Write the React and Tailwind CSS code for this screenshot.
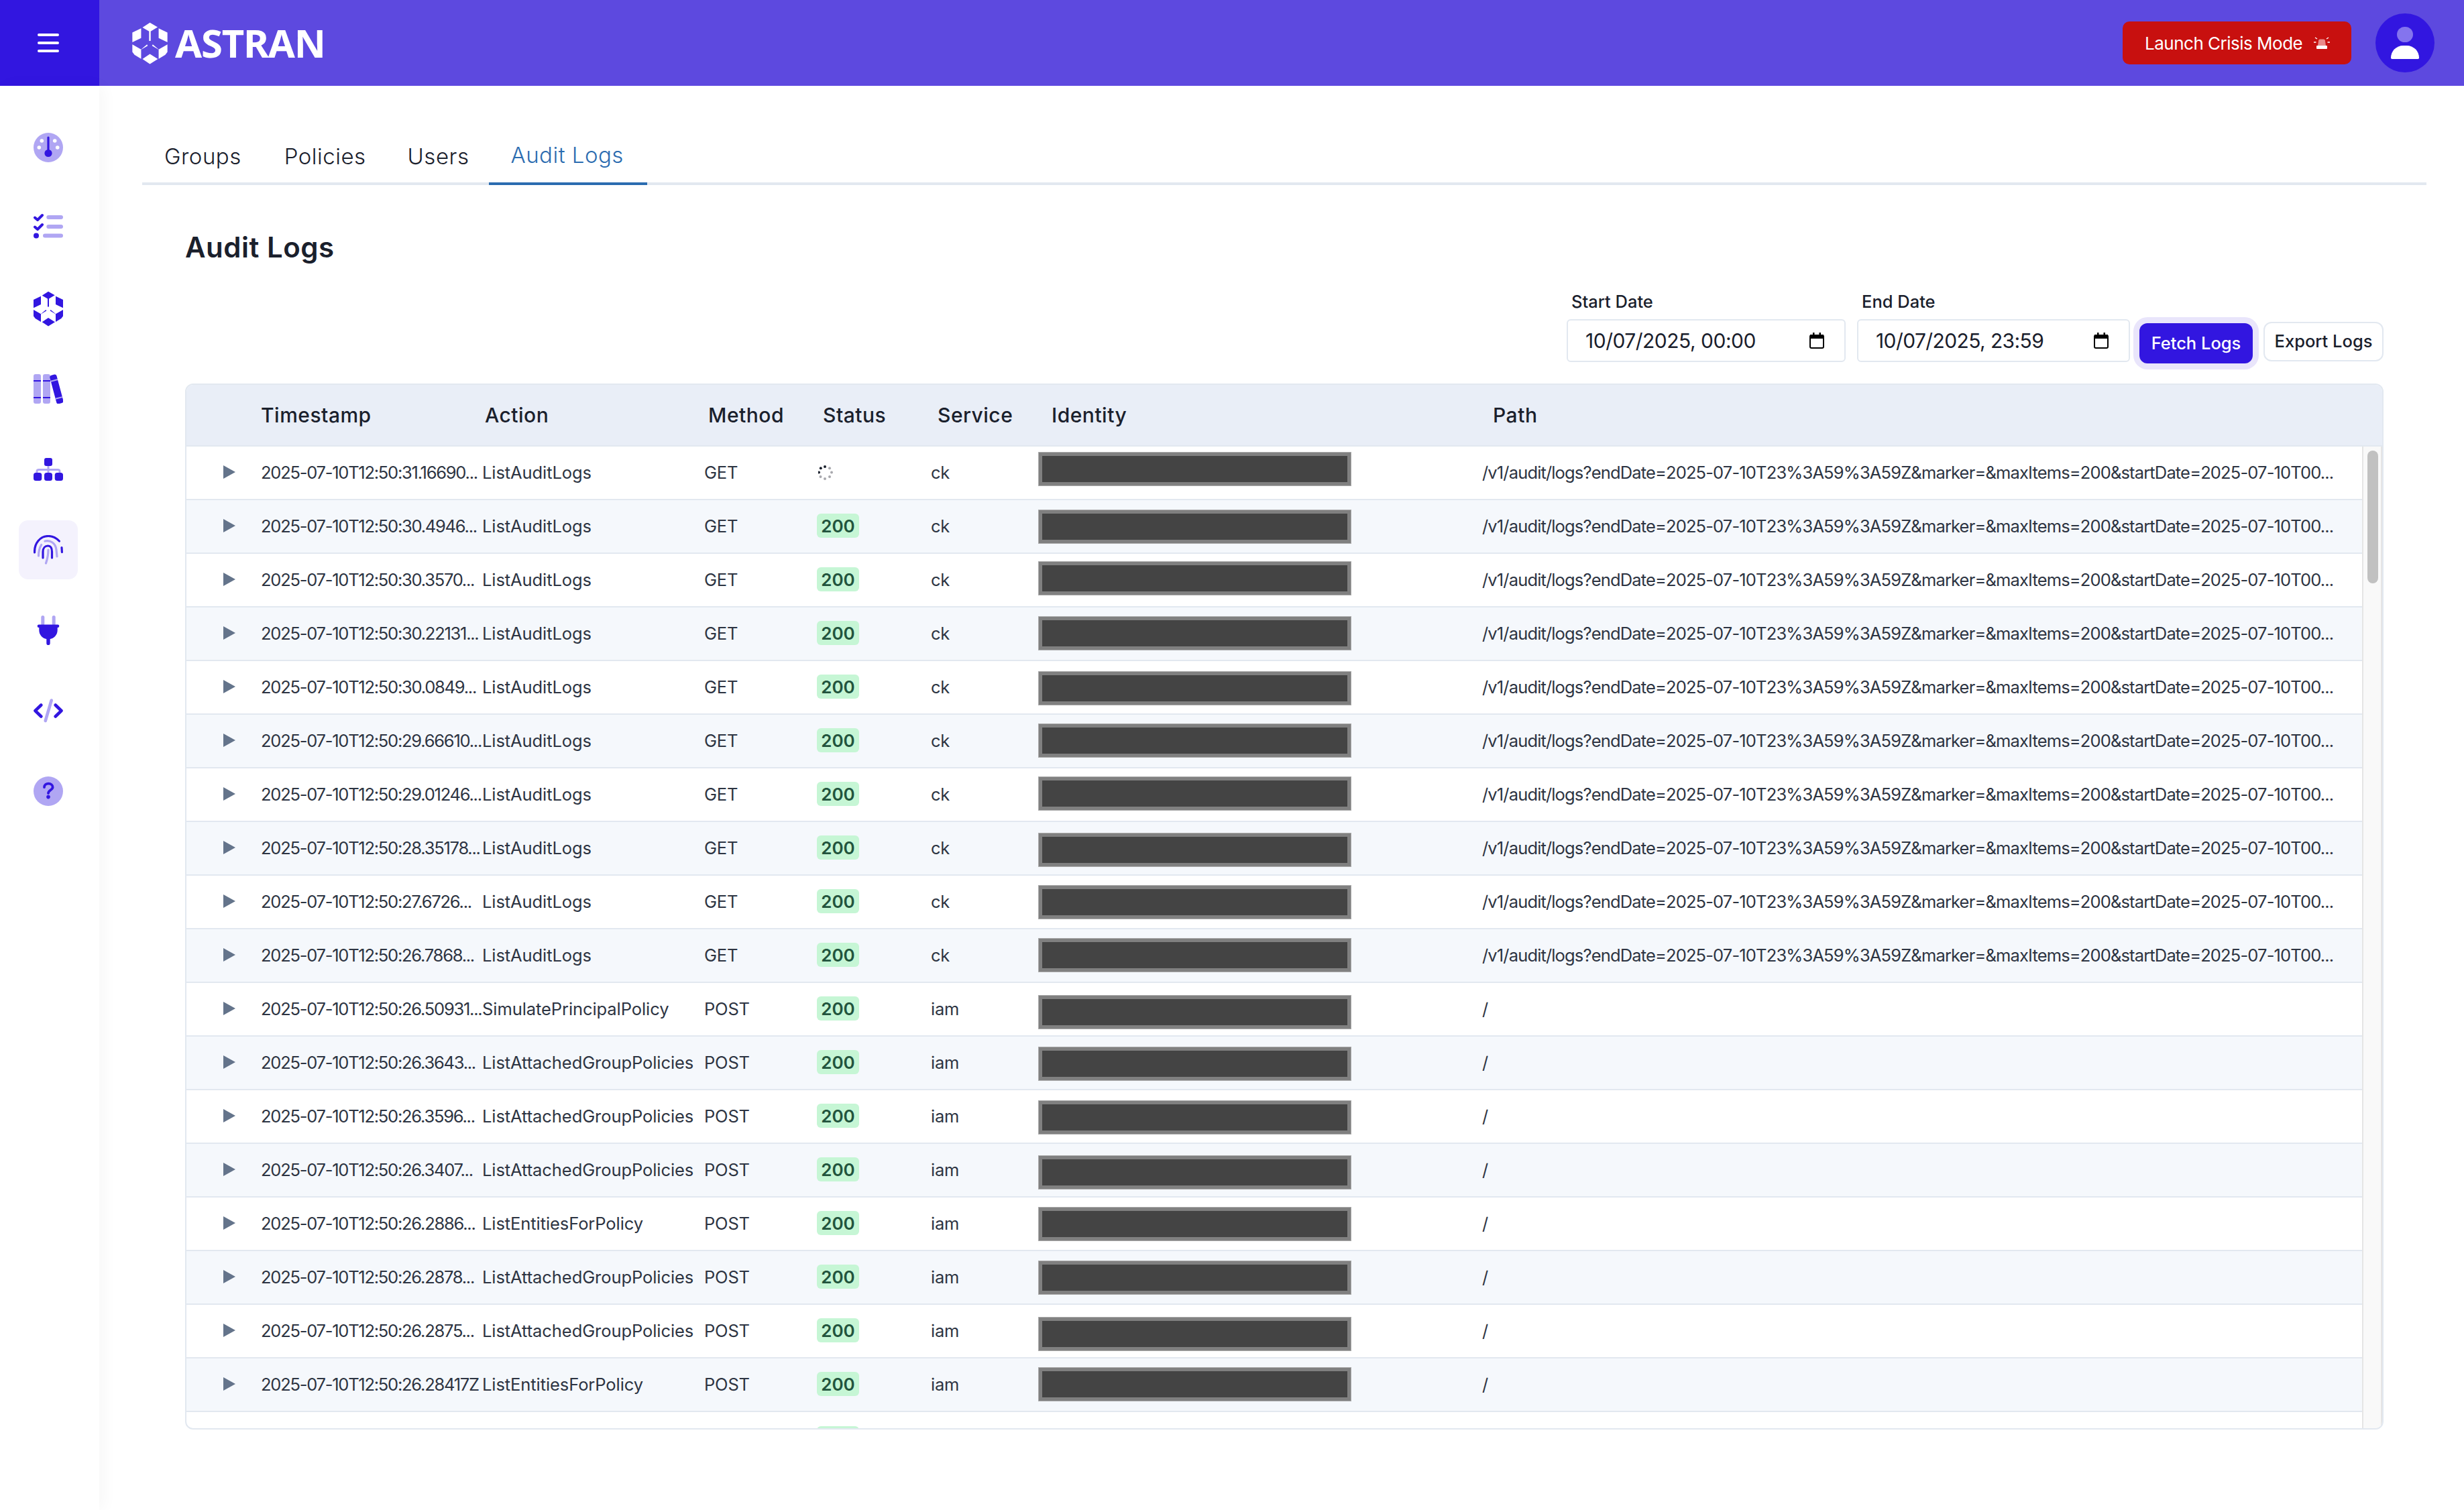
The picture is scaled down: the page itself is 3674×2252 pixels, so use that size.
import React from 'react';

const DARK = '#3216e0';
const LIGHT = '#b0a6f3';

const PATH = '/v1/audit/logs?endDate=2025-07-10T23%3A59%3A59Z&marker=&maxItems=200&startDate=2025-07-10T00...';
const LIST = 'ListAttachedGroupPolicies';
const ENT = 'ListEntitiesForPolicy';

const rows = [
  { ts: '31.16690...', action: 'ListAuditLogs', shift: -6, loading: true },
  { ts: '30.4946...', action: 'ListAuditLogs', shift: 0 },
  { ts: '30.3570...', action: 'ListAuditLogs', shift: -3 },
  { ts: '30.22131...', action: 'ListAuditLogs', shift: -1 },
  { ts: '30.0849...', action: 'ListAuditLogs', shift: 1 },
  { ts: '29.66610...', action: 'ListAuditLogs', shift: -1 },
  { ts: '29.01246...', action: 'ListAuditLogs', shift: -2 },
  { ts: '28.35178...', action: 'ListAuditLogs', shift: 2 },
  { ts: '27.6726...', action: 'ListAuditLogs', shift: 0 },
  { ts: '26.7868...', action: 'ListAuditLogs', shift: -1 },
  { ts: '26.50931...', action: 'SimulatePrincipalPolicy', shift: 4, iam: true },
  { ts: '26.3643...', action: LIST, shift: 1, iam: true },
  { ts: '26.3596...', action: LIST, shift: 1, iam: true },
  { ts: '26.3407...', action: LIST, shift: 3, iam: true },
  { ts: '26.2886...', action: ENT, shift: 0, iam: true },
  { ts: '26.2878...', action: LIST, shift: 0, iam: true },
  { ts: '26.2875...', action: LIST, shift: 4, iam: true },
  { ts: '26.28417Z', action: ENT, shift: -1, iam: true },
];

function HexLogo({ color, className }) {
  return (
    <svg viewBox="0 0 44 53" className={className} fill={color}>
      <path d="M22 .7 31.7 6.3 23 11.6V23.5H21V11.6L12.7 6.7Z" />
      <path d="M0 13 11 7.7V20L0 25.3Z" />
      <path d="M44 13 33 7.7V20L44 25.3Z" />
      <path d="M0 28 11 34.2 18.4 28 19.3 29.6 11 34.4V46L2.7 41 0 37.5Z" />
      <path d="M44 28 33 34.2 25.6 28 24.7 29.6 33 34.4V46L41.3 41 44 37.5Z" />
      <path d="M22 40 32 46.3 22 52.6 12.7 46.3Z" />
    </svg>
  );
}

function DialIcon() {
  return (
    <svg viewBox="0 0 44 44" className="w-[44px] h-[44px]">
      <circle cx="22" cy="22" r="22" fill={LIGHT} />
      <circle cx="12.3" cy="12" r="2.8" fill="#fff" />
      <circle cx="31.7" cy="12" r="2.8" fill="#fff" />
      <circle cx="8.3" cy="22" r="2.8" fill="#fff" />
      <circle cx="35.7" cy="22" r="2.8" fill="#fff" />
      <path d="M22 7V28" stroke={DARK} strokeWidth="3.2" strokeLinecap="round" />
      <circle cx="22" cy="30.5" r="5.6" fill={DARK} />
    </svg>
  );
}

function ChecklistIcon() {
  return (
    <svg viewBox="0 0 44 44" className="w-[44px] h-[44px]" fill="none">
      <path d="M2 6.5 6 10 13 3M2 20.5 6 24 13 17" stroke={DARK} strokeWidth="4" strokeLinecap="round" strokeLinejoin="round" />
      <circle cx="4" cy="33.5" r="4" fill={DARK} />
      <rect x="19.3" y="3" width="24.7" height="6" rx="3" fill={LIGHT} />
      <rect x="19.3" y="17" width="24.7" height="6" rx="3" fill={LIGHT} />
      <rect x="14" y="30.5" width="30" height="6" rx="3" fill={LIGHT} />
    </svg>
  );
}

function BooksIcon() {
  return (
    <svg viewBox="0 0 44 44" className="w-[44px] h-[44px]">
      <rect x="0" y="0" width="11" height="44" rx="3" fill={LIGHT} />
      <rect x="14" y="0" width="11" height="44" rx="3" fill={LIGHT} />
      <path d="M0 10H11M0 35H11M14 10H25M14 35H25" stroke={DARK} strokeWidth="2" />
      <g transform="rotate(-15 34 22)">
        <rect x="29" y="0.5" width="10.5" height="44" rx="3" fill={DARK} />
        <path d="M29 9H39.5M29 36H39.5" stroke={LIGHT} strokeWidth="2" />
      </g>
    </svg>
  );
}

function OrgIcon() {
  return (
    <svg viewBox="0 0 44 44" className="w-[44px] h-[44px]" fill={DARK}>
      <path d="M5 29V25Q5 22.5 8 22.5H36Q39 22.5 39 25V29M22 15V29" stroke={LIGHT} strokeWidth="3" fill="none" />
      <rect x="16" y="5" width="12" height="12" rx="3" />
      <rect x="0" y="27" width="12.3" height="12" rx="3.5" />
      <rect x="16" y="27" width="12" height="12" rx="3.5" />
      <rect x="31.7" y="27" width="12.3" height="12" rx="3.5" />
    </svg>
  );
}

function FingerprintIcon() {
  return (
    <svg viewBox="0 0 44 44" className="w-[44px] h-[44px]" fill="none" strokeWidth="3.2" strokeLinecap="round">
      <path d="M1.6 26C1 12 10 1.5 22 1.5 28.5 1.5 34 4.5 38.4 9M42 18.5 42.4 25.5" stroke={DARK} />
      <path d="M7.5 31C7.5 24 9 19 11.7 14.5M17 9C25 7 33 12 34 22L35 32" stroke={LIGHT} />
      <path d="M14 34V25C14 19 17.5 16 21.5 16 25 16 27.5 19 27.5 25V34" stroke={DARK} />
      <path d="M22 22C22 29 20.5 36 18.5 42" stroke={LIGHT} />
    </svg>
  );
}

function PlugIcon() {
  return (
    <svg viewBox="0 0 44 44" className="w-[44px] h-[44px]">
      <rect x="11.3" y="0" width="5" height="15" rx="2.5" fill={LIGHT} />
      <rect x="27.7" y="0" width="5" height="15" rx="2.5" fill={LIGHT} />
      <rect x="5.7" y="13.6" width="32.6" height="4.4" rx="2.2" fill={DARK} />
      <path d="M8.3 17H35.7V22C35.7 29 30 34.5 24.7 35V41.5A2.7 2.7 0 0 1 19.3 41.5V35C14 34.5 8.3 29 8.3 22Z" fill={DARK} />
    </svg>
  );
}

function CodeIcon() {
  return (
    <svg viewBox="0 0 44 44" className="w-[44px] h-[44px]" fill="none" strokeWidth="4.6" strokeLinecap="round">
      <path d="M26.7 6.5 17.7 37" stroke={LIGHT} />
      <path d="M11.3 13.5 2.5 22 11.3 30.5M32.7 13.5 41.5 22 32.7 30.5" stroke={DARK} strokeLinejoin="round" />
    </svg>
  );
}

function HelpIcon() {
  return (
    <svg viewBox="0 0 44 44" className="w-[44px] h-[44px]" fill="none">
      <circle cx="22" cy="22" r="22" fill={LIGHT} />
      <path d="M16 16C16 12.5 19 10.6 22.3 10.6 25.8 10.6 28.6 12.8 28.6 16 28.6 20 22 20.5 22 25" stroke={DARK} strokeWidth="3.8" strokeLinecap="round" />
      <circle cx="22" cy="30.6" r="2.8" fill={DARK} />
    </svg>
  );
}

function Calendar() {
  return (
    <svg viewBox="0 0 22 24" className="w-[22px] h-[24px]" fill="none">
      <rect x="1" y="4" width="20" height="19" rx="2" stroke="#000" strokeWidth="2" />
      <rect x="1" y="3" width="20" height="6" fill="#000" />
      <rect x="5" y="0" width="2.5" height="4" fill="#000" />
      <rect x="14.5" y="0" width="2.5" height="4" fill="#000" />
    </svg>
  );
}

function AlarmIcon() {
  return (
    <svg viewBox="0 0 24 18" className="w-[24px] h-[18px]" fill="none">
      <path d="M7 6Q7 3.5 9.5 3.5H14.5Q17 3.5 17 6L18 13H6Z" fill="#e98a8a" />
      <rect x="4" y="13" width="16" height="5" rx="1" fill="#fff" />
      <path d="M2 1 5 3M22 1 19 3M0 8H3.5M24 8H20.5" stroke="#fff" strokeWidth="1.4" />
    </svg>
  );
}

function Spinner() {
  const dots = [
    [10, 2, '#1a202c'], [3.8, 4.2, '#1a202c'], [1, 10.5, '#1a202c'], [3.5, 17, '#a8a8ad'],
    [10, 20, '#a8a8ad'], [17, 17, '#a8a8ad'], [20, 10.5, '#a8a8ad'], [17, 4.2, '#a8a8ad'],
  ];
  return (
    <svg viewBox="0 0 22 22" className="w-[22px] h-[22px] ml-[2px]">
      {dots.map(([x, y, c]) => <circle key={`${x}-${y}`} cx={x} cy={y} r="2" fill={c} />)}
    </svg>
  );
}

function Row({ row, index }) {
  return (
    <div className={`grid grid-cols-[111px_330px_331px_168px_170px_160px_662px_1fr] items-center h-[80px] shrink-0 border-b-2 border-[#e2e8f0] text-[25.5px] text-[#2d3442] whitespace-nowrap ${index % 2 === 1 ? 'bg-[#f5f8fc]' : 'bg-white'}`}>
      <div className="pl-[55px]">
        <svg viewBox="0 0 18 20" className="w-[18px] h-[20px] fill-[#64748b] -mt-[3px]"><path d="M0 0 18 10 0 20Z" /></svg>
      </div>
      <div className="tracking-[-1.25px]">2025-07-10T12:50:{row.ts}</div>
      <div className="tracking-[-0.08px]">{row.action}</div>
      <div className="tracking-[-0.2px]">{row.iam ? 'POST' : 'GET'}</div>
      <div>
        {row.loading ? <Spinner /> : (
          <span className="inline-flex items-center justify-center w-[63px] h-[36px] rounded-md bg-[#c6f6d5] text-[#22543d] font-semibold text-[26px]">200</span>
        )}
      </div>
      <div className="tracking-[-0.2px]">{row.iam ? 'iam' : 'ck'}</div>
      <div>
        <div
          className="w-[465px] h-[49px] ml-px bg-[#444444] border-[5px] border-[#808080] outline outline-[#ababab]"
          style={{ transform: `translateY(${row.shift}px)` }}
        />
      </div>
      <div className="tracking-[-0.85px]">{row.iam ? '/' : PATH}</div>
    </div>
  );
}

const navIcons = [DialIcon, ChecklistIcon, null, BooksIcon, OrgIcon, FingerprintIcon, PlugIcon, CodeIcon, HelpIcon];

export default function App() {
  return (
    <div className="flex flex-col min-h-screen h-[2252px] w-[3674px] overflow-hidden bg-white text-[#1a202c] font-['Inter',sans-serif]">
      {/* top bar */}
      <header className="flex items-center h-[128px] shrink-0 bg-[#5d49df]">
        <div className="flex flex-col justify-center gap-[8px] w-[148px] h-full pl-[56px] bg-[#3216e0]">
          <div className="w-[32px] h-[4px] rounded-full bg-white" />
          <div className="w-[32px] h-[4px] rounded-full bg-white" />
          <div className="w-[32px] h-[4px] rounded-full bg-white" />
        </div>
        <div className="flex items-center gap-[10px] ml-[48px]">
          <HexLogo color="#fff" className="w-[55px] h-[63px]" />
          <span className="text-[58px] leading-none font-bold text-white font-['Noto_Sans',sans-serif] tracking-[-1.2px]">ASTRAN</span>
        </div>
        <div className="flex items-center gap-[36px] ml-auto mr-[44px]">
          <button className="flex items-center gap-[17px] h-[64px] w-[341px] pl-[33px] rounded-[10px] bg-[#c8100f] text-white text-[26px] tracking-[-0.5px]">
            Launch Crisis Mode
            <AlarmIcon />
          </button>
          <div className="relative w-[88px] h-[88px] rounded-full bg-[#3216e0]">
            <div className="absolute left-[32px] top-[20px] w-[24px] h-[23px] rounded-full bg-[#8474ee]" />
            <div className="absolute left-[23px] top-[48px] w-[42px] h-[20px] rounded-t-[20px] rounded-b-[2px] bg-white" />
          </div>
        </div>
      </header>

      <div className="flex flex-1 min-h-0">
        {/* side nav */}
        <nav className="relative z-10 flex flex-col gap-[32px] w-[148px] shrink-0 pt-[48px] pl-[28px] bg-white shadow-[6px_0_22px_rgba(0,0,0,0.035)]">
          {navIcons.map((Icon, i) => (
            <div key={i} className={`flex items-center justify-center w-[88px] h-[88px] rounded-[14px] ${i === 5 ? 'bg-[#f4f2fd]' : ''}`}>
              {Icon ? <Icon /> : <HexLogo color={DARK} className="w-[44px] h-[53px]" />}
            </div>
          ))}
        </nav>

        <main className="flex-1 min-w-0 pt-[64px] pl-[64px] pr-[56px]">
          {/* tabs */}
          <div className="flex h-[84px] border-b-4 border-[#e2e8f0] text-[33px] font-light tracking-[0.5px]">
            <div className="flex items-center h-[84px] pl-[33px] pr-[32px]">Groups</div>
            <div className="flex items-center h-[84px] pl-[32px] pr-[30px]">Policies</div>
            <div className="flex items-center h-[84px] pl-[32px] pr-[30px]">Users</div>
            <div className="flex items-center h-[84px] pl-[32px] pr-[35px] border-b-4 border-[#2b6cb0] text-[#2b6cb0]">Audit Logs</div>
          </div>

          <div className="pl-[64px] pr-[64px]">
            <h1 className="mt-[67px] text-[42px] leading-[52px] font-semibold tracking-[0.5px] text-[#1a202c]">Audit Logs</h1>

            {/* filters */}
            <div className="flex items-end justify-end mt-[39px]">
              <div className="mr-[17px] mb-[2px]">
                <label className="block pl-[7px] mb-[10px] text-[25.5px] leading-[32px] font-medium">Start Date</label>
                <div className="flex items-center justify-between w-[416px] h-[64px] pl-[26px] pr-[30px] rounded-md border-2 border-[#e2e8f0] text-[30px] tracking-[-0.5px]">
                  10/07/2025, 00:00
                  <Calendar />
                </div>
              </div>
              <div className="mr-[14px] mb-[2px]">
                <label className="block pl-[7px] mb-[10px] text-[25.5px] leading-[32px] font-medium">End Date</label>
                <div className="flex items-center justify-between w-[407px] h-[64px] pl-[26px] pr-[30px] rounded-md border-2 border-[#e2e8f0] text-[30px] tracking-[-0.6px]">
                  10/07/2025, 23:59
                  <Calendar />
                </div>
              </div>
              <button className="w-[169px] h-[60px] mr-[16px] rounded-xl bg-[#3216e0] text-white text-[25.5px] font-medium shadow-[0_0_0_9px_#e9e5fb]">Fetch Logs</button>
              <button className="w-[179px] h-[59px] mb-[3px] rounded-xl border-2 border-[#e2e8f0] text-[25.5px] font-medium">Export Logs</button>
            </div>

            {/* table */}
            <div className="flex flex-col h-[1560px] mt-[30px] rounded-xl border-2 border-[#e2e8f0] overflow-hidden">
              <div className="grid grid-cols-[111px_334px_333px_171px_171px_170px_658px_1fr] items-center h-[92px] shrink-0 border-b-2 border-[#e2e8f0] bg-[#e9eef7] text-[30px] font-medium tracking-[0.5px] whitespace-nowrap">
                <div />
                <div>Timestamp</div>
                <div>Action</div>
                <div>Method</div>
                <div>Status</div>
                <div>Service</div>
                <div>Identity</div>
                <div>Path</div>
              </div>
              <div className="flex flex-1 min-h-0">
                <div className="flex flex-col flex-1 min-w-0 overflow-hidden">
                  {rows.map((row, i) => <Row key={row.ts} row={row} index={i} />)}
                  {/* next row is cut by the panel, only the top of its badge shows */}
                  <div className="shrink-0 pt-[21px] pl-[940px]">
                    <div className="w-[63px] h-[36px] rounded-md bg-[#c6f6d5]" />
                  </div>
                </div>
                {/* scrollbar */}
                <div className="w-[30px] shrink-0 pt-[6px] pl-[6px] bg-[#f9f9f9] border-l-2 border-r-2 border-[#e5e5e5]">
                  <div className="w-[16px] h-[198px] rounded-lg bg-[#c1c1c1]" />
                </div>
              </div>
            </div>
          </div>
        </main>
      </div>
    </div>
  );
}
